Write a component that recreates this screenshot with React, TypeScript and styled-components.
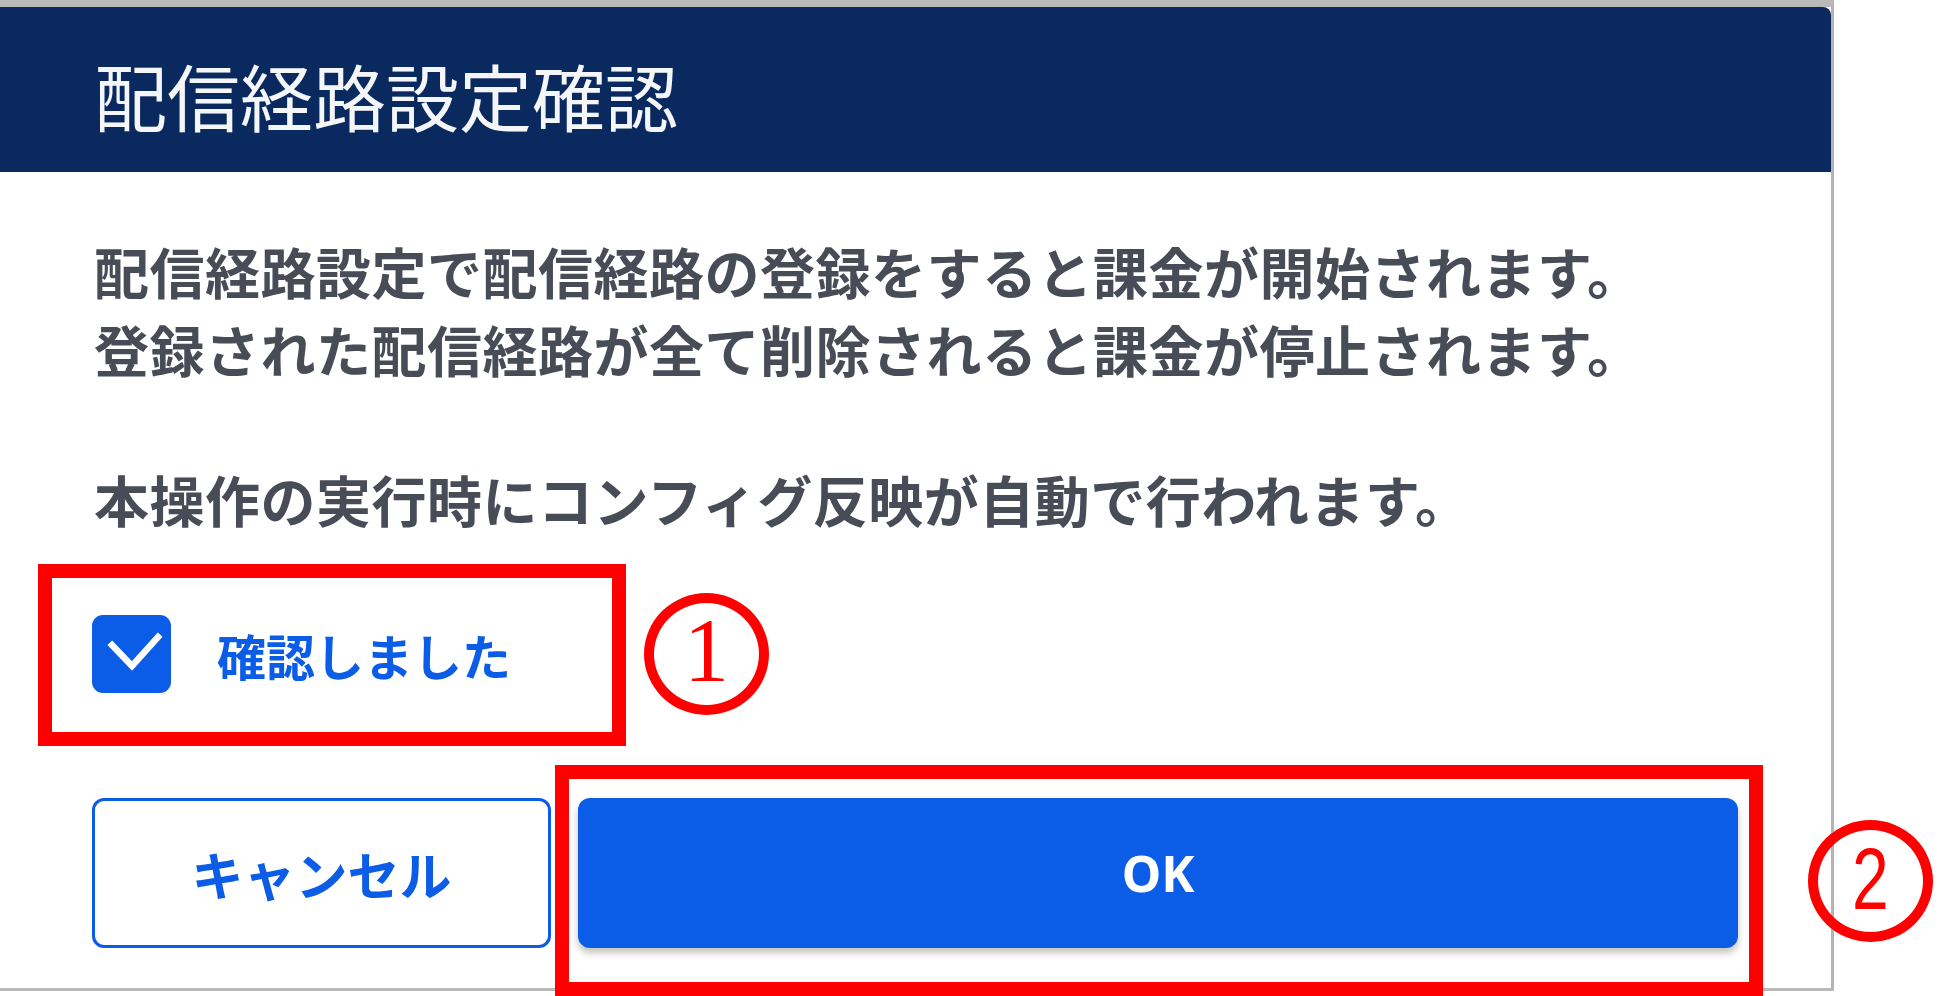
import styled, { createGlobalStyle } from "styled-components";

const GlobalStyle = createGlobalStyle`
  html, body {
    margin: 0;
    padding: 0;
    background: #fff;
  }
  body {
    width: 1943px;
    height: 996px;
    overflow: hidden;
    font-family: "Noto Sans CJK JP", "Noto Sans", sans-serif;
  }
`;

const BLUE = "#0b5ce6";
const RED = "#ff0000";

const Page = styled.div`
  position: relative;
  width: 1943px;
  height: 996px;
  display: flex;
  align-items: flex-start;
`;

const Dialog = styled.section`
  box-sizing: border-box;
  width: 1834px;
  height: 991px;
  display: flex;
  flex-direction: column;
  background: #fff;
  border-top: 7px solid #b9b9b9;
  border-right: 3px solid #b4b4b4;
  border-bottom: 3px solid #b9b9b9;
`;

const Header = styled.header`
  box-sizing: border-box;
  height: 165px;
  display: flex;
  align-items: center;
  padding: 10px 0 0 94px;
  background: #0a2a5f;
  border-top-right-radius: 8px;
`;

const Title = styled.h1`
  margin: 0;
  font-size: 73px;
  line-height: 1;
  font-weight: 400;
  color: #f4f6fa;
  letter-spacing: 0;
`;

const Body = styled.div`
  flex: 1;
  display: flex;
  flex-direction: column;
  padding: 59px 93px 40px 92px;
`;

const Message = styled.p<{ $gap?: number }>`
  margin: ${(p) => p.$gap ?? 0}px 0 0 2px;
  font-size: 55px;
  line-height: 78px;
  letter-spacing: 0.5px;
  font-weight: 700;
  color: #474c57;
  white-space: nowrap;
`;

const ConfirmRow = styled.label`
  margin-top: 78px;
  height: 78px;
  display: flex;
  align-items: center;
  gap: 46px;
`;

const CheckBox = styled.span`
  width: 79px;
  height: 78px;
  border-radius: 11px;
  background: ${BLUE};
  display: flex;
  align-items: center;
  justify-content: center;
`;

const ConfirmLabel = styled.span`
  font-size: 49px;
  font-weight: 700;
  color: ${BLUE};
  line-height: 1;
`;

const Actions = styled.div`
  margin-top: 105px;
  display: flex;
  gap: 27px;
`;

const CancelButton = styled.button`
  box-sizing: border-box;
  width: 459px;
  height: 150px;
  border: 3px solid ${BLUE};
  border-radius: 12px;
  background: #fff;
  color: ${BLUE};
  font-family: "Noto Sans CJK JP", sans-serif;
  font-size: 52px;
  font-weight: 700;
  cursor: pointer;
`;

const OkButton = styled.button`
  flex: 1;
  height: 150px;
  border: none;
  border-radius: 12px;
  background: ${BLUE};
  color: #fff;
  font-family: "Noto Sans", "Noto Sans CJK JP", sans-serif;
  font-size: 50px;
  font-weight: 700;
  box-shadow: 0 5px 7px rgba(90, 80, 60, 0.35);
  cursor: pointer;
`;

// annotation overlays drawn on top of the screenshot
const RedFrame = styled.div<{ $x: number; $y: number; $w: number; $h: number }>`
  position: absolute;
  box-sizing: border-box;
  left: ${(p) => p.$x}px;
  top: ${(p) => p.$y}px;
  width: ${(p) => p.$w}px;
  height: ${(p) => p.$h}px;
  border: 14px solid ${RED};
  pointer-events: none;
`;

const StepMark = styled.div<{ $x: number; $y: number }>`
  position: absolute;
  box-sizing: border-box;
  left: ${(p) => p.$x}px;
  top: ${(p) => p.$y}px;
  width: 125px;
  height: 122px;
  border: 10px solid ${RED};
  border-radius: 50%;
  display: flex;
  align-items: center;
  justify-content: center;
  background: transparent;
`;

const StepDigit = styled.span<{ $serif?: boolean }>`
  color: ${RED};
  line-height: 1;
  font-family: ${(p) =>
    p.$serif ? '"Liberation Serif", serif' : '"Liberation Sans", sans-serif'};
  font-size: ${(p) => (p.$serif ? 90 : 88)}px;
  font-weight: 400;
  transform: ${(p) => (p.$serif ? "translateY(-3px)" : "scaleX(0.75) translateY(-2px)")};
`;

const CheckIcon = () => (
  <svg width="79" height="78" viewBox="0 0 79 78" fill="none">
    <polyline
      points="20,30 40,51 66,22"
      stroke="#fff"
      strokeWidth="6.5"
      strokeLinecap="square"
      strokeLinejoin="miter"
    />
  </svg>
);

export default function App() {
  return (
    <>
      <GlobalStyle />
      <Page>
        <Dialog>
          <Header>
            <Title>配信経路設定確認</Title>
          </Header>
          <Body>
            <Message>
              配信経路設定で配信経路の登録をすると課金が開始されます。
              <br />
              登録された配信経路が全て削除されると課金が停止されます。
            </Message>
            <Message $gap={72}>本操作の実行時にコンフィグ反映が自動で行われます。</Message>
            <ConfirmRow>
              <CheckBox>
                <CheckIcon />
              </CheckBox>
              <ConfirmLabel>確認しました</ConfirmLabel>
            </ConfirmRow>
            <Actions>
              <CancelButton>キャンセル</CancelButton>
              <OkButton>OK</OkButton>
            </Actions>
          </Body>
        </Dialog>

        <RedFrame $x={38} $y={564} $w={588} $h={182} />
        <StepMark $x={644} $y={593}>
          <StepDigit $serif>1</StepDigit>
        </StepMark>
        <RedFrame $x={555} $y={765} $w={1208} $h={231} />
        <StepMark $x={1808} $y={820}>
          <StepDigit>2</StepDigit>
        </StepMark>
      </Page>
    </>
  );
}
